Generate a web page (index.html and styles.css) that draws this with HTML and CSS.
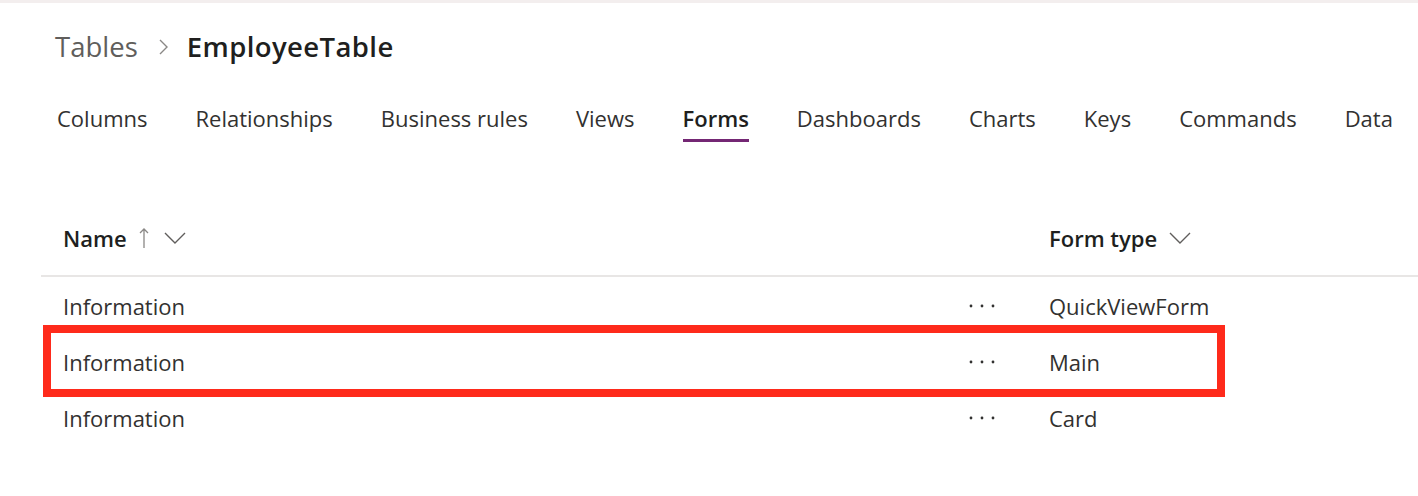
FILE: index.html
```html
<!DOCTYPE html>
<html lang="en">
<head>
<meta charset="utf-8">
<title>EmployeeTable - Forms</title>
<link rel="stylesheet" href="styles.css">
</head>
<body>
<div class="topline"></div>
<header class="page-head">
  <nav class="breadcrumb">
    <span class="crumb">Tables</span>
    <svg class="crumb-sep" width="11" height="16" viewBox="0 0 11 16"><polyline points="2,1 9,8 2,15" fill="none" stroke="#8a8886" stroke-width="1.4"/></svg>
    <span class="crumb current">EmployeeTable</span>
  </nav>
  <div class="tabs">
    <span class="tab">Columns</span>
    <span class="tab">Relationships</span>
    <span class="tab">Business rules</span>
    <span class="tab">Views</span>
    <span class="tab active">Forms</span>
    <span class="tab">Dashboards</span>
    <span class="tab">Charts</span>
    <span class="tab">Keys</span>
    <span class="tab">Commands</span>
    <span class="tab">Data</span>
  </div>
</header>
<section class="grid">
  <div class="row head">
    <div class="cell name">
      <span>Name</span>
      <svg class="sort" width="10" height="22" viewBox="0 0 10 22"><path d="M5 2 V21 M1 6 L5 2 L9 6" fill="none" stroke="#8a8886" stroke-width="1.3"/></svg>
      <svg class="chev" width="22" height="12" viewBox="0 0 22 12"><polyline points="1,1 11,11 21,1" fill="none" stroke="#605e5c" stroke-width="1.4"/></svg>
    </div>
    <div class="cell more"></div>
    <div class="cell type">
      <span>Form type</span>
      <svg class="chev" width="22" height="12" viewBox="0 0 22 12"><polyline points="1,1 11,11 21,1" fill="none" stroke="#605e5c" stroke-width="1.4"/></svg>
    </div>
  </div>
  <div class="row">
    <div class="cell name">Information</div>
    <div class="cell more"><svg width="28" height="4" viewBox="0 0 28 4"><circle cx="2" cy="2" r="1.4" fill="#323130"/><circle cx="13" cy="2" r="1.4" fill="#323130"/><circle cx="24" cy="2" r="1.4" fill="#323130"/></svg></div>
    <div class="cell type">QuickViewForm</div>
  </div>
  <div class="row marked">
    <div class="cell name">Information</div>
    <div class="cell more"><svg width="28" height="4" viewBox="0 0 28 4"><circle cx="2" cy="2" r="1.4" fill="#323130"/><circle cx="13" cy="2" r="1.4" fill="#323130"/><circle cx="24" cy="2" r="1.4" fill="#323130"/></svg></div>
    <div class="cell type">Main</div>
  </div>
  <div class="row">
    <div class="cell name">Information</div>
    <div class="cell more"><svg width="28" height="4" viewBox="0 0 28 4"><circle cx="2" cy="2" r="1.4" fill="#323130"/><circle cx="13" cy="2" r="1.4" fill="#323130"/><circle cx="24" cy="2" r="1.4" fill="#323130"/></svg></div>
    <div class="cell type">Card</div>
  </div>
</section>
</body>
</html>
```
FILE: styles.css
```css
*, *::before, *::after { box-sizing: border-box; }
html, body {
  margin: 0;
  padding: 0;
  background: #ffffff;
}
body {
  font-family: "Open Sans", "Noto Sans", "Liberation Sans", sans-serif;
  color: #323130;
  width: 1418px;
  height: 496px;
  overflow: hidden;
}
.topline {
  height: 3px;
  background: #f3eeee;
}
.page-head {
  padding-left: 55px;
}
.breadcrumb {
  display: flex;
  align-items: center;
  height: 36px;
  margin-top: 26px;
  font-size: 27.5px;
  line-height: 36px;
}
.crumb { color: #605e5c; }
.crumb.current {
  color: #201f1e;
  font-weight: 600;
  letter-spacing: 0.4px;
}
.crumb-sep {
  margin: 0 18px 0 20px;
}
.tabs {
  display: flex;
  gap: 48px;
  margin-top: 38px;
  padding-left: 2px;
  font-size: 22px;
  line-height: 30px;
}
.tab {
  padding-bottom: 6px;
  border-bottom: 3px solid transparent;
  color: #323130;
  white-space: nowrap;
}
.tab.active {
  font-weight: 600;
  border-bottom-color: #742774;
  color: #201f1e;
}
.grid {
  margin-top: 81px;
  margin-left: 41px;
}
.row {
  display: grid;
  grid-template-columns: 928px 80px 1fr;
  font-size: 22px;
  line-height: 30px;
  padding: 14px 0 12px;
  height: 56px;
  position: relative;
}
.row.head {
  height: auto;
  padding: 0 0 22px;
  border-bottom: 2px solid #e8e6e5;
  font-weight: 600;
  color: #201f1e;
}
.cell {
  white-space: nowrap;
  display: flex;
  align-items: center;
}
.cell.name { padding-left: 22px; }
.row.head .sort { margin-left: 12px; }
.row.head .cell.name .chev { margin-left: 15px; }
.row.head .cell.type .chev { margin-left: 12px; }
.cell.more svg { margin-top: 0; }
.row.marked::after {
  content: "";
  position: absolute;
  left: 2px;
  top: -8px;
  bottom: -8px;
  width: 1182px;
  border: 8px solid #fe2a1b;
  pointer-events: none;
}
```
